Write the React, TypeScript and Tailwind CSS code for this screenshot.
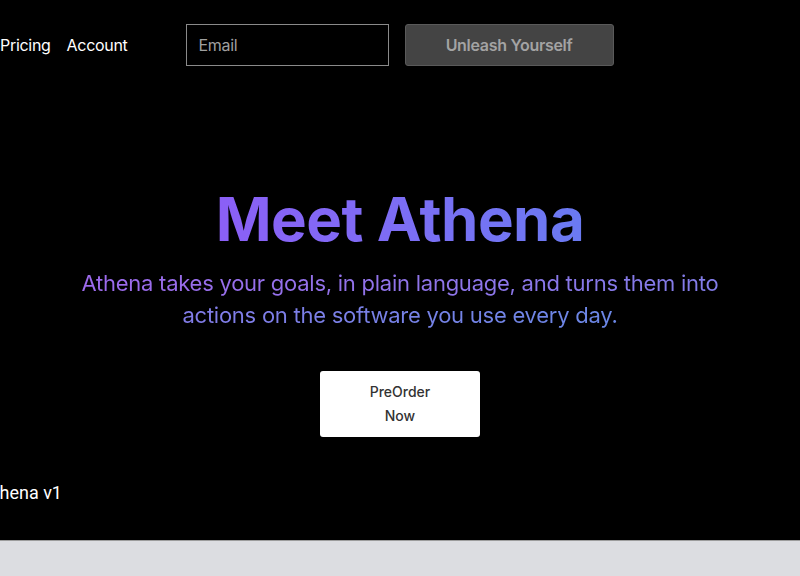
export default function App() {
  return (
    <div
      className="w-[800px] h-[576px] overflow-hidden flex flex-col bg-black text-white"
      style={{ fontFamily: "Inter, 'Noto Sans', sans-serif" }}
    >
      <main className="h-[540px] flex flex-col">
        <nav className="flex items-center pt-6 text-base tracking-[-0.3px]">
          <a className="text-white">Pricing</a>
          <a className="ml-[16px] text-white">Account</a>
          <input
            type="text"
            placeholder="Email"
            className="ml-[58px] w-[203px] h-[42px] border border-[#8a8a8a] bg-black px-3 text-base text-white placeholder:text-[#a0a0a0] outline-none"
          />
          <button className="ml-[16px] w-[209px] h-[42px] rounded-[3px] border border-[#5a5a5a] bg-[#444444] text-base font-semibold text-[#a3a3a3]">
            Unleash Yourself
          </button>
        </nav>

        <h1 className="mt-[123px] text-center text-[60px] leading-none font-bold tracking-[-0.5px]">
          <span className="bg-gradient-to-r from-[#8b5ff6] to-[#6a7af2] bg-clip-text text-transparent">
            Meet Athena
          </span>
        </h1>
        <p className="mx-auto mt-[18px] w-[660px] text-center text-[22px] leading-[32px] tracking-[-0.25px]">
          <span className="bg-gradient-to-r from-[#9d6aec] to-[#6b87e6] bg-clip-text text-transparent">
            Athena takes your goals, in plain language, and turns them into
            actions on the software you use every day.
          </span>
        </p>

        <button className="mx-auto mt-[40px] w-[160px] h-[66px] rounded-[3px] bg-white py-[9px] text-sm leading-6 font-medium text-[#333333]">
          PreOrder
          <br />
          Now
        </button>

        <div className="mt-[44px] overflow-hidden">
          <p
            className="-ml-[18px] text-[18px] leading-6 text-white"
            style={{ fontFamily: "Roboto, 'Noto Sans', sans-serif" }}
          >
            Athena v1
          </p>
        </div>
      </main>
      <footer className="flex-1 border-t border-[#9c9c9c] bg-[#dcdde1]" />
    </div>
  );
}
